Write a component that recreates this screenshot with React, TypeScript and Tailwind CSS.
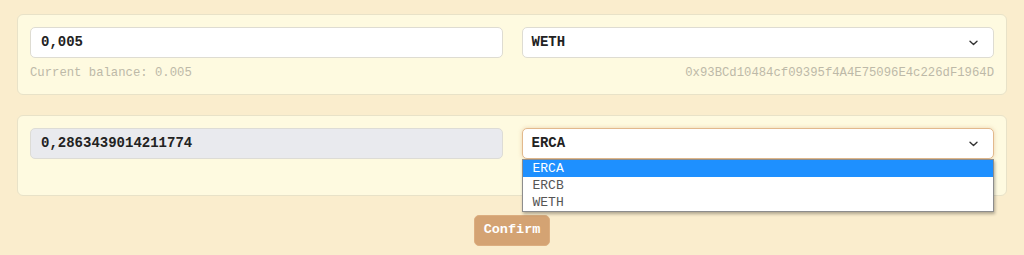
import React from 'react';

const mono = { fontFamily: '"Liberation Mono", "Courier New", monospace' };

const Chevron = () => (
  <svg width="9" height="6" viewBox="0 0 9 6" className="text-[#333]">
    <path d="M1 1.2l3.5 3.3 3.5-3.3" fill="none" stroke="currentColor" strokeWidth="1.4" strokeLinecap="round" strokeLinejoin="round" />
  </svg>
);

interface SelectBoxProps {
  value: string;
  open?: boolean;
  options?: string[];
}

const SelectBox: React.FC<SelectBoxProps> = ({ value, open, options = [] }) => (
  <div className="relative">
    <div
      className={
        open
          ? 'flex h-[31px] items-center justify-between rounded-[5px] border border-[#e2b98d] bg-white pl-[9px] pr-[15px] shadow-[0_0_4px_rgba(212,163,115,0.45)]'
          : 'flex h-[31px] items-center justify-between rounded-[5px] border border-[#dedcd2] bg-white pl-[9px] pr-[15px]'
      }
    >
      <span className="text-[14px] font-bold text-[#222]">{value}</span>
      <Chevron />
    </div>
    {open && (
      <ul className="absolute left-0 right-0 top-[31px] z-10 border border-[#8d8d8d] bg-white shadow-[1px_2px_3px_rgba(0,0,0,0.3)]">
        {options.map((o) => (
          <li
            key={o}
            className={
              o === value
                ? 'h-[17px] bg-[#1e90ff] pl-[10px] text-[13px] leading-[17px] text-white'
                : 'h-[17px] pl-[10px] text-[13px] leading-[17px] text-[#555]'
            }
          >
            {o}
          </li>
        ))}
      </ul>
    )}
  </div>
);

export default function App() {
  return (
    <div className="min-h-[255px] bg-[#faedcd] px-[17px] pt-[14px] pb-[10px]" style={mono}>
      <div className="flex flex-col gap-[20px]">
        <div className="rounded-[6px] border border-[#e8e2c8] bg-[#fefae0] p-[12px]">
          <div className="grid grid-cols-2 gap-[19px]">
            <div>
              <div className="flex h-[31px] items-center rounded-[5px] border border-[#dedcd2] bg-white pl-[10px] text-[14px] font-bold text-[#222]">
                0,005
              </div>
              <div className="mt-[7px] h-[17px] text-[12.25px] leading-[17px] text-[#bdb9a8]">Current balance: 0.005</div>
            </div>
            <div>
              <SelectBox value="WETH" />
              <div className="mt-[7px] h-[17px] text-right text-[12.25px] leading-[17px] text-[#bdb9a8]">
                0x93BCd10484cf09395f4A4E75096E4c226dF1964D
              </div>
            </div>
          </div>
        </div>

        <div className="rounded-[6px] border border-[#e8e2c8] bg-[#fefae0] p-[12px]">
          <div className="grid grid-cols-2 gap-[19px]">
            <div>
              <div className="flex h-[31px] items-center rounded-[5px] border border-[#dddcd6] bg-[#e9eaee] pl-[10px] text-[14px] font-bold text-[#222]">
                0,2863439014211774
              </div>
              <div className="mt-[7px] h-[17px]" />
            </div>
            <div>
              <SelectBox value="ERCA" open options={['ERCA', 'ERCB', 'WETH']} />
              <div className="mt-[7px] h-[17px]" />
            </div>
          </div>
        </div>
      </div>

      <div className="mt-[19px] flex justify-center">
        <button className="h-[31px] rounded-[5px] border border-[#dcae80] bg-[#d4a373] px-[9px] text-[13.5px] font-bold text-white">
          Confirm
        </button>
      </div>
    </div>
  );
}
